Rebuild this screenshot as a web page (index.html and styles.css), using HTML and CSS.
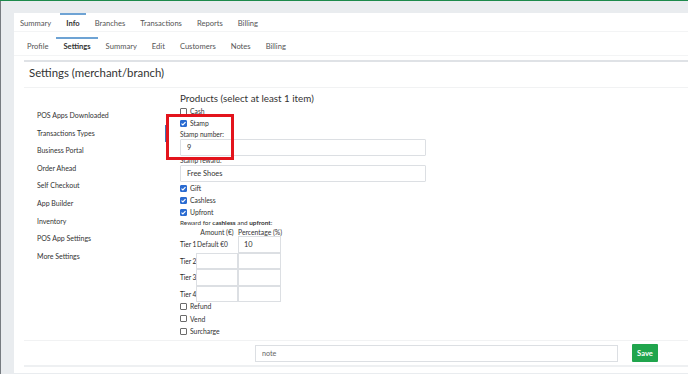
FILE: index.html
```html
<!DOCTYPE html>
<html lang="en">
<head>
<meta charset="utf-8">
<title>Settings (merchant/branch)</title>
<link rel="stylesheet" href="styles.css">
</head>
<body>
<div class="shell">
  <div class="panel">
    <nav class="tabs tabs-main">
      <a class="tab">Summary</a>
      <a class="tab active">Info</a>
      <a class="tab">Branches</a>
      <a class="tab">Transactions</a>
      <a class="tab">Reports</a>
      <a class="tab">Billing</a>
    </nav>
    <nav class="tabs tabs-sub">
      <a class="tab">Profile</a>
      <a class="tab active">Settings</a>
      <a class="tab">Summary</a>
      <a class="tab">Edit</a>
      <a class="tab">Customers</a>
      <a class="tab">Notes</a>
      <a class="tab">Billing</a>
    </nav>
    <section class="card">
      <h1 class="card-title">Settings (merchant/branch)</h1>
      <div class="card-body">
        <ul class="side-nav">
          <li>POS Apps Downloaded</li>
          <li class="current">Transactions Types</li>
          <li>Business Portal</li>
          <li>Order Ahead</li>
          <li>Self Checkout</li>
          <li>App Builder</li>
          <li>Inventory</li>
          <li>POS App Settings</li>
          <li>More Settings</li>
        </ul>
        <form class="products">
          <h2 class="products-title">Products (select at least 1 item)</h2>
          <div class="check"><span class="box"></span>Cash</div>
          <div class="check"><span class="box on"><svg viewBox="0 0 8 8"><path d="M1.7 4.1 3.3 5.7 6.3 2.3"/></svg></span>Stamp</div>
          <div class="field-label">Stamp number:</div>
          <input class="text-input" type="text" value="9">
          <div class="field-label second">Stamp reward:</div>
          <input class="text-input" type="text" value="Free Shoes">
          <div class="check"><span class="box on"><svg viewBox="0 0 8 8"><path d="M1.7 4.1 3.3 5.7 6.3 2.3"/></svg></span>Gift</div>
          <div class="check"><span class="box on"><svg viewBox="0 0 8 8"><path d="M1.7 4.1 3.3 5.7 6.3 2.3"/></svg></span>Cashless</div>
          <div class="check"><span class="box on"><svg viewBox="0 0 8 8"><path d="M1.7 4.1 3.3 5.7 6.3 2.3"/></svg></span>Upfront</div>
          <div class="reward-note">Reward for <b>cashless</b> and <b>upfront</b>:</div>
          <div class="tiers">
            <span></span><span class="th">Amount (€)</span><span class="th">Percentage (%)</span>
            <span class="tier">Tier 1</span><span class="default">Default €0</span><input class="cell" type="text" value="10">
            <span class="tier">Tier 2</span><input class="cell" type="text"><input class="cell" type="text">
            <span class="tier">Tier 3</span><input class="cell" type="text"><input class="cell" type="text">
            <span class="tier">Tier 4</span><input class="cell" type="text"><input class="cell" type="text">
          </div>
          <div class="check tail first"><span class="box"></span>Refund</div>
          <div class="check tail"><span class="box"></span>Vend</div>
          <div class="check tail"><span class="box"></span>Surcharge</div>
          <div class="highlight"></div>
        </form>
      </div>
      <div class="card-footer">
        <input class="note-input" type="text" placeholder="note">
        <button class="save" type="button">Save</button>
      </div>
    </section>
  </div>
</div>
</body>
</html>
```

FILE: styles.css
```css
* { box-sizing: border-box; }
html, body { margin: 0; padding: 0; }
body {
  width: 688px;
  height: 374px;
  overflow: hidden;
  background: #e9ecef;
  border-top: 1px solid #1d8a4b;
  font-family: Lato, "Open Sans", sans-serif;
  color: #333;
}
.shell {
  height: 373px;
  border-left: 1px solid #767b80;
  padding: 13px 0 0 13px;
}
.panel {
  background: #fff;
  height: 100%;
}
.tabs {
  display: flex;
  align-items: flex-start;
}
.tab {
  color: #555;
  text-decoration: none;
  white-space: nowrap;
  border-top: 2px solid transparent;
}
.tab.active {
  border-top-color: #6ea3d4;
  color: #333;
  font-weight: 700;
}
.tabs-main {
  height: 19px;
  border-bottom: 1px solid #f3f4f5;
  gap: 3px;
  margin-top: -1px;
}
.tabs-main .tab {
  font-size: 7.6px;
  line-height: 14px;
  padding: 1px 6px 0;
}
.tabs-sub {
  height: 24px;
  padding-left: 6px;
  border-bottom: 1px solid #f3f4f5;
  gap: 1px;
}
.tabs-sub .tab {
  margin-top: 5px;
  font-size: 7.6px;
  line-height: 14px;
  padding: 0 7px 3px;
}
.card {
  margin: 4px 0 0 10px;
  border-top: 2px solid #dfe2e6;
}
.card-title {
  margin: 0;
  padding: 3px 0 6px 5px;
  font-size: 11.4px;
  line-height: 16px;
  font-weight: 400;
  color: #333;
  border-bottom: 1px solid #f1f2f3;
}
.card-body {
  display: grid;
  grid-template-columns: 143px 1fr;
  height: 253px;
  border-bottom: 1px solid #f1f2f3;
}
.side-nav {
  list-style: none;
  margin: 0;
  padding: 19px 0 0;
}
.side-nav li {
  height: 17.6px;
  line-height: 17.6px;
  padding-left: 13px;
  font-size: 7px;
  color: #333;
  white-space: nowrap;
}
.side-nav li.current {
  border-right: 2px solid #3f74b6;
}
.products {
  position: relative;
  padding: 4px 0 0 13px;
  font-size: 6.6px;
  color: #333;
}
.products-title {
  margin: 0;
  font-size: 9.8px;
  line-height: 13px;
  font-weight: 400;
  color: #333;
}
.check {
  display: flex;
  align-items: center;
  gap: 3px;
  height: 12px;
  font-size: 6.8px;
}
.box {
  display: inline-block;
  width: 7px;
  height: 7px;
  border: 1px solid #6b6b6b;
  border-radius: 1px;
  background: #fff;
}
.box.on {
  border-color: #2a6bd1;
  background: #2a6bd1;
  position: relative;
}
.box svg {
  position: absolute;
  left: -1px;
  top: -1px;
  width: 7px;
  height: 7px;
  fill: none;
  stroke: #fff;
  stroke-width: 1.3;
}
.field-label {
  line-height: 10px;
  font-size: 6.6px;
}
.field-label.second {
  margin-top: -1px;
}
.text-input {
  display: block;
  width: 246px;
  height: 17px;
  border: 1px solid #dcdfe3;
  border-radius: 1px;
  padding: 0 6px;
  font-family: inherit;
  font-size: 7.4px;
  color: #333;
  outline: none;
}
.reward-note {
  margin-top: -1px;
  line-height: 11px;
  font-size: 6.4px;
}
.reward-note b { font-weight: 700; }
.tiers {
  display: grid;
  grid-template-columns: 16px 42px 43px;
  grid-auto-rows: 16.5px;
  grid-template-rows: 8px;
  align-items: center;
  font-size: 6.4px;
}
.tiers .th {
  text-align: center;
  line-height: 8px;
  font-size: 6.8px;
  white-space: nowrap;
}
.tier {
  font-size: 6.6px;
  font-weight: 400;
  letter-spacing: -0.1px;
  white-space: nowrap;
  color: #1f1f1f;
}
.default { white-space: nowrap; padding-left: 1px; font-size: 6.6px; }
.cell {
  width: 100%;
  height: 100%;
  border: 1px solid #dcdfe3;
  padding: 0 5px;
  font-family: inherit;
  font-size: 7.4px;
  color: #333;
  outline: none;
}
.check.tail { height: 12.5px; }
.check.tail.first { margin-top: -2px; }
.highlight {
  position: absolute;
  left: -1px;
  top: 26px;
  width: 68px;
  height: 46px;
  border: 3px solid #e3141c;
  pointer-events: none;
}
.card-footer {
  display: flex;
  align-items: center;
  height: 26px;
  padding-left: 231px;
  border-bottom: 2px solid #eef0f2;
}
.note-input {
  width: 363px;
  height: 17px;
  border: 1px solid #dcdfe3;
  padding: 0 6px;
  font-family: inherit;
  font-size: 7.2px;
  color: #333;
  outline: none;
}
.note-input::placeholder { color: #666; }
.save {
  margin-left: 14px;
  width: 26px;
  height: 18px;
  padding: 0;
  border: none;
  border-radius: 1px;
  background: #20a54d;
  color: #fff;
  font-family: inherit;
  font-size: 7.6px;
  font-weight: 700;
}
```
